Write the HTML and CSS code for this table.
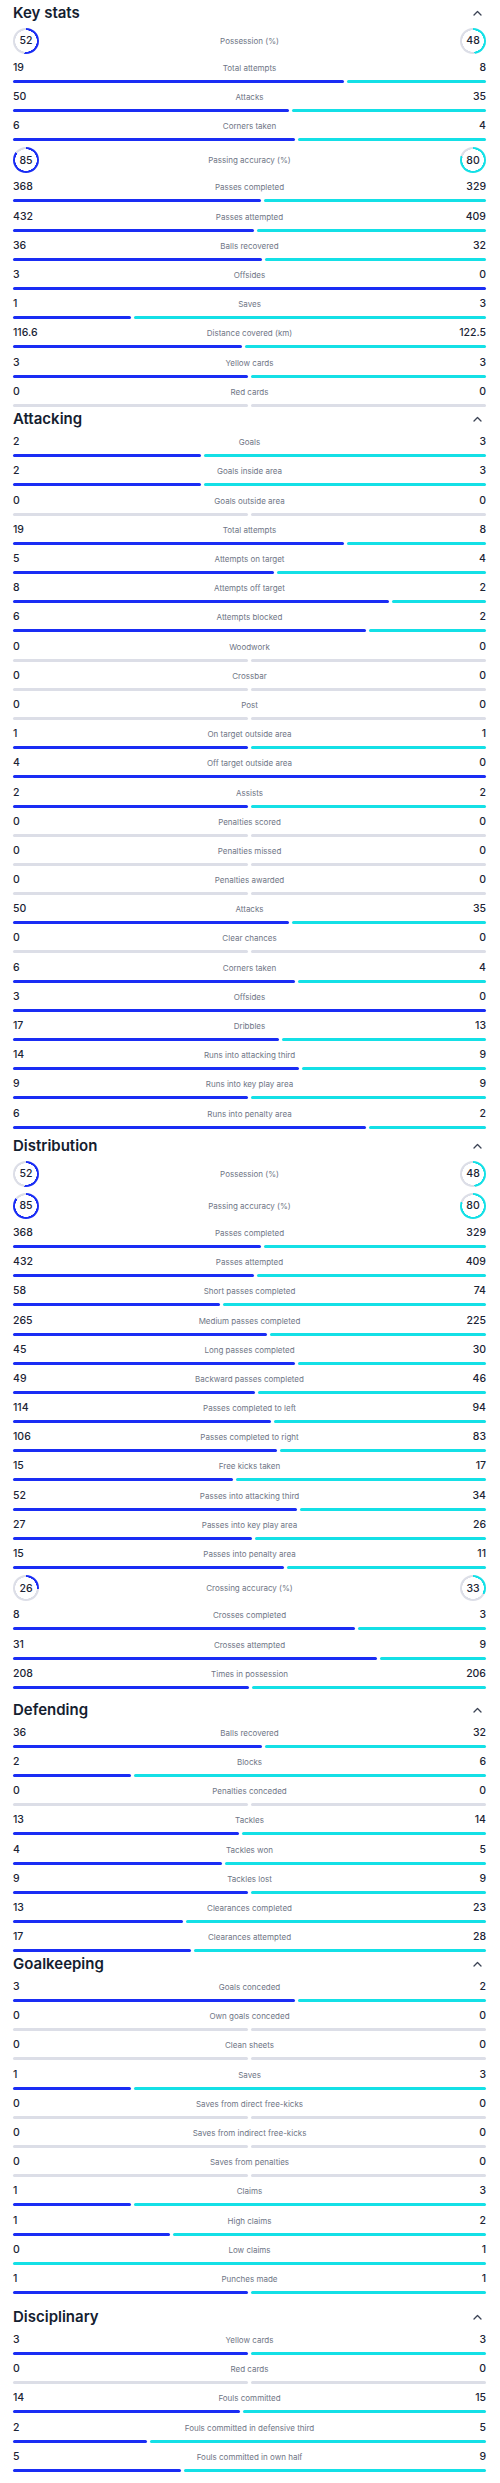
FILE: index.html
```html
<!DOCTYPE html>
<html lang="en">
<head>
<meta charset="utf-8">
<title>Match stats</title>
<link rel="stylesheet" href="styles.css">
</head>
<body>
<main class="page">

<section class="card card--key">
  <header class="card-head"><h2 class="card-title">Key stats</h2><svg class="chev" viewBox="0 0 9 6" width="9" height="6"><polyline points="1,5 4.5,1.5 8,5"/></svg></header>
  <div class="rows">
    <div class="row row--ring"><span class="ring ring--home" style="--p:52">52</span><span class="label">Possession (%)</span><span class="ring ring--away" style="--p:48">48</span></div>
    <div class="row"><span class="num">19</span><span class="label">Total attempts</span><span class="num num--away">8</span><div class="bar"><i class="seg seg--home" style="flex:19"></i><i class="seg seg--away" style="flex:8"></i></div></div>
    <div class="row"><span class="num">50</span><span class="label">Attacks</span><span class="num num--away">35</span><div class="bar"><i class="seg seg--home" style="flex:50"></i><i class="seg seg--away" style="flex:35"></i></div></div>
    <div class="row"><span class="num">6</span><span class="label">Corners taken</span><span class="num num--away">4</span><div class="bar"><i class="seg seg--home" style="flex:6"></i><i class="seg seg--away" style="flex:4"></i></div></div>
    <div class="row row--ring"><span class="ring ring--home" style="--p:85">85</span><span class="label">Passing accuracy (%)</span><span class="ring ring--away" style="--p:80">80</span></div>
    <div class="row"><span class="num">368</span><span class="label">Passes completed</span><span class="num num--away">329</span><div class="bar"><i class="seg seg--home" style="flex:368"></i><i class="seg seg--away" style="flex:329"></i></div></div>
    <div class="row"><span class="num">432</span><span class="label">Passes attempted</span><span class="num num--away">409</span><div class="bar"><i class="seg seg--home" style="flex:432"></i><i class="seg seg--away" style="flex:409"></i></div></div>
    <div class="row"><span class="num">36</span><span class="label">Balls recovered</span><span class="num num--away">32</span><div class="bar"><i class="seg seg--home" style="flex:36"></i><i class="seg seg--away" style="flex:32"></i></div></div>
    <div class="row"><span class="num">3</span><span class="label">Offsides</span><span class="num num--away">0</span><div class="bar"><i class="seg seg--home"></i></div></div>
    <div class="row"><span class="num">1</span><span class="label">Saves</span><span class="num num--away">3</span><div class="bar"><i class="seg seg--home" style="flex:1"></i><i class="seg seg--away" style="flex:3"></i></div></div>
    <div class="row"><span class="num">116.6</span><span class="label">Distance covered (km)</span><span class="num num--away">122.5</span><div class="bar"><i class="seg seg--home" style="flex:116.6"></i><i class="seg seg--away" style="flex:122.5"></i></div></div>
    <div class="row"><span class="num">3</span><span class="label">Yellow cards</span><span class="num num--away">3</span><div class="bar"><i class="seg seg--home" style="flex:3"></i><i class="seg seg--away" style="flex:3"></i></div></div>
    <div class="row"><span class="num">0</span><span class="label">Red cards</span><span class="num num--away">0</span><div class="bar"><i class="seg seg--none"></i><i class="seg seg--none"></i></div></div>
  </div>
</section>

<section class="card card--attacking">
  <header class="card-head"><h2 class="card-title">Attacking</h2><svg class="chev" viewBox="0 0 9 6" width="9" height="6"><polyline points="1,5 4.5,1.5 8,5"/></svg></header>
  <div class="rows">
    <div class="row"><span class="num">2</span><span class="label">Goals</span><span class="num num--away">3</span><div class="bar"><i class="seg seg--home" style="flex:2"></i><i class="seg seg--away" style="flex:3"></i></div></div>
    <div class="row"><span class="num">2</span><span class="label">Goals inside area</span><span class="num num--away">3</span><div class="bar"><i class="seg seg--home" style="flex:2"></i><i class="seg seg--away" style="flex:3"></i></div></div>
    <div class="row"><span class="num">0</span><span class="label">Goals outside area</span><span class="num num--away">0</span><div class="bar"><i class="seg seg--none"></i><i class="seg seg--none"></i></div></div>
    <div class="row"><span class="num">19</span><span class="label">Total attempts</span><span class="num num--away">8</span><div class="bar"><i class="seg seg--home" style="flex:19"></i><i class="seg seg--away" style="flex:8"></i></div></div>
    <div class="row"><span class="num">5</span><span class="label">Attempts on target</span><span class="num num--away">4</span><div class="bar"><i class="seg seg--home" style="flex:5"></i><i class="seg seg--away" style="flex:4"></i></div></div>
    <div class="row"><span class="num">8</span><span class="label">Attempts off target</span><span class="num num--away">2</span><div class="bar"><i class="seg seg--home" style="flex:8"></i><i class="seg seg--away" style="flex:2"></i></div></div>
    <div class="row"><span class="num">6</span><span class="label">Attempts blocked</span><span class="num num--away">2</span><div class="bar"><i class="seg seg--home" style="flex:6"></i><i class="seg seg--away" style="flex:2"></i></div></div>
    <div class="row"><span class="num">0</span><span class="label">Woodwork</span><span class="num num--away">0</span><div class="bar"><i class="seg seg--none"></i><i class="seg seg--none"></i></div></div>
    <div class="row"><span class="num">0</span><span class="label">Crossbar</span><span class="num num--away">0</span><div class="bar"><i class="seg seg--none"></i><i class="seg seg--none"></i></div></div>
    <div class="row"><span class="num">0</span><span class="label">Post</span><span class="num num--away">0</span><div class="bar"><i class="seg seg--none"></i><i class="seg seg--none"></i></div></div>
    <div class="row"><span class="num">1</span><span class="label">On target outside area</span><span class="num num--away">1</span><div class="bar"><i class="seg seg--home" style="flex:1"></i><i class="seg seg--away" style="flex:1"></i></div></div>
    <div class="row"><span class="num">4</span><span class="label">Off target outside area</span><span class="num num--away">0</span><div class="bar"><i class="seg seg--home"></i></div></div>
    <div class="row"><span class="num">2</span><span class="label">Assists</span><span class="num num--away">2</span><div class="bar"><i class="seg seg--home" style="flex:2"></i><i class="seg seg--away" style="flex:2"></i></div></div>
    <div class="row"><span class="num">0</span><span class="label">Penalties scored</span><span class="num num--away">0</span><div class="bar"><i class="seg seg--none"></i><i class="seg seg--none"></i></div></div>
    <div class="row"><span class="num">0</span><span class="label">Penalties missed</span><span class="num num--away">0</span><div class="bar"><i class="seg seg--none"></i><i class="seg seg--none"></i></div></div>
    <div class="row"><span class="num">0</span><span class="label">Penalties awarded</span><span class="num num--away">0</span><div class="bar"><i class="seg seg--none"></i><i class="seg seg--none"></i></div></div>
    <div class="row"><span class="num">50</span><span class="label">Attacks</span><span class="num num--away">35</span><div class="bar"><i class="seg seg--home" style="flex:50"></i><i class="seg seg--away" style="flex:35"></i></div></div>
    <div class="row"><span class="num">0</span><span class="label">Clear chances</span><span class="num num--away">0</span><div class="bar"><i class="seg seg--none"></i><i class="seg seg--none"></i></div></div>
    <div class="row"><span class="num">6</span><span class="label">Corners taken</span><span class="num num--away">4</span><div class="bar"><i class="seg seg--home" style="flex:6"></i><i class="seg seg--away" style="flex:4"></i></div></div>
    <div class="row"><span class="num">3</span><span class="label">Offsides</span><span class="num num--away">0</span><div class="bar"><i class="seg seg--home"></i></div></div>
    <div class="row"><span class="num">17</span><span class="label">Dribbles</span><span class="num num--away">13</span><div class="bar"><i class="seg seg--home" style="flex:17"></i><i class="seg seg--away" style="flex:13"></i></div></div>
    <div class="row"><span class="num">14</span><span class="label">Runs into attacking third</span><span class="num num--away">9</span><div class="bar"><i class="seg seg--home" style="flex:14"></i><i class="seg seg--away" style="flex:9"></i></div></div>
    <div class="row"><span class="num">9</span><span class="label">Runs into key play area</span><span class="num num--away">9</span><div class="bar"><i class="seg seg--home" style="flex:9"></i><i class="seg seg--away" style="flex:9"></i></div></div>
    <div class="row"><span class="num">6</span><span class="label">Runs into penalty area</span><span class="num num--away">2</span><div class="bar"><i class="seg seg--home" style="flex:6"></i><i class="seg seg--away" style="flex:2"></i></div></div>
  </div>
</section>

<section class="card card--distribution">
  <header class="card-head"><h2 class="card-title">Distribution</h2><svg class="chev" viewBox="0 0 9 6" width="9" height="6"><polyline points="1,5 4.5,1.5 8,5"/></svg></header>
  <div class="rows">
    <div class="row row--ring"><span class="ring ring--home" style="--p:52">52</span><span class="label">Possession (%)</span><span class="ring ring--away" style="--p:48">48</span></div>
    <div class="row row--ring"><span class="ring ring--home" style="--p:85">85</span><span class="label">Passing accuracy (%)</span><span class="ring ring--away" style="--p:80">80</span></div>
    <div class="row"><span class="num">368</span><span class="label">Passes completed</span><span class="num num--away">329</span><div class="bar"><i class="seg seg--home" style="flex:368"></i><i class="seg seg--away" style="flex:329"></i></div></div>
    <div class="row"><span class="num">432</span><span class="label">Passes attempted</span><span class="num num--away">409</span><div class="bar"><i class="seg seg--home" style="flex:432"></i><i class="seg seg--away" style="flex:409"></i></div></div>
    <div class="row"><span class="num">58</span><span class="label">Short passes completed</span><span class="num num--away">74</span><div class="bar"><i class="seg seg--home" style="flex:58"></i><i class="seg seg--away" style="flex:74"></i></div></div>
    <div class="row"><span class="num">265</span><span class="label">Medium passes completed</span><span class="num num--away">225</span><div class="bar"><i class="seg seg--home" style="flex:265"></i><i class="seg seg--away" style="flex:225"></i></div></div>
    <div class="row"><span class="num">45</span><span class="label">Long passes completed</span><span class="num num--away">30</span><div class="bar"><i class="seg seg--home" style="flex:45"></i><i class="seg seg--away" style="flex:30"></i></div></div>
    <div class="row"><span class="num">49</span><span class="label">Backward passes completed</span><span class="num num--away">46</span><div class="bar"><i class="seg seg--home" style="flex:49"></i><i class="seg seg--away" style="flex:46"></i></div></div>
    <div class="row"><span class="num">114</span><span class="label">Passes completed to left</span><span class="num num--away">94</span><div class="bar"><i class="seg seg--home" style="flex:114"></i><i class="seg seg--away" style="flex:94"></i></div></div>
    <div class="row"><span class="num">106</span><span class="label">Passes completed to right</span><span class="num num--away">83</span><div class="bar"><i class="seg seg--home" style="flex:106"></i><i class="seg seg--away" style="flex:83"></i></div></div>
    <div class="row"><span class="num">15</span><span class="label">Free kicks taken</span><span class="num num--away">17</span><div class="bar"><i class="seg seg--home" style="flex:15"></i><i class="seg seg--away" style="flex:17"></i></div></div>
    <div class="row"><span class="num">52</span><span class="label">Passes into attacking third</span><span class="num num--away">34</span><div class="bar"><i class="seg seg--home" style="flex:52"></i><i class="seg seg--away" style="flex:34"></i></div></div>
    <div class="row"><span class="num">27</span><span class="label">Passes into key play area</span><span class="num num--away">26</span><div class="bar"><i class="seg seg--home" style="flex:27"></i><i class="seg seg--away" style="flex:26"></i></div></div>
    <div class="row"><span class="num">15</span><span class="label">Passes into penalty area</span><span class="num num--away">11</span><div class="bar"><i class="seg seg--home" style="flex:15"></i><i class="seg seg--away" style="flex:11"></i></div></div>
    <div class="row row--ring"><span class="ring ring--home" style="--p:26">26</span><span class="label">Crossing accuracy (%)</span><span class="ring ring--away" style="--p:33">33</span></div>
    <div class="row"><span class="num">8</span><span class="label">Crosses completed</span><span class="num num--away">3</span><div class="bar"><i class="seg seg--home" style="flex:8"></i><i class="seg seg--away" style="flex:3"></i></div></div>
    <div class="row"><span class="num">31</span><span class="label">Crosses attempted</span><span class="num num--away">9</span><div class="bar"><i class="seg seg--home" style="flex:31"></i><i class="seg seg--away" style="flex:9"></i></div></div>
    <div class="row"><span class="num">208</span><span class="label">Times in possession</span><span class="num num--away">206</span><div class="bar"><i class="seg seg--home" style="flex:208"></i><i class="seg seg--away" style="flex:206"></i></div></div>
  </div>
</section>

<section class="card card--defending">
  <header class="card-head"><h2 class="card-title">Defending</h2><svg class="chev" viewBox="0 0 9 6" width="9" height="6"><polyline points="1,5 4.5,1.5 8,5"/></svg></header>
  <div class="rows">
    <div class="row"><span class="num">36</span><span class="label">Balls recovered</span><span class="num num--away">32</span><div class="bar"><i class="seg seg--home" style="flex:36"></i><i class="seg seg--away" style="flex:32"></i></div></div>
    <div class="row"><span class="num">2</span><span class="label">Blocks</span><span class="num num--away">6</span><div class="bar"><i class="seg seg--home" style="flex:2"></i><i class="seg seg--away" style="flex:6"></i></div></div>
    <div class="row"><span class="num">0</span><span class="label">Penalties conceded</span><span class="num num--away">0</span><div class="bar"><i class="seg seg--none"></i><i class="seg seg--none"></i></div></div>
    <div class="row"><span class="num">13</span><span class="label">Tackles</span><span class="num num--away">14</span><div class="bar"><i class="seg seg--home" style="flex:13"></i><i class="seg seg--away" style="flex:14"></i></div></div>
    <div class="row"><span class="num">4</span><span class="label">Tackles won</span><span class="num num--away">5</span><div class="bar"><i class="seg seg--home" style="flex:4"></i><i class="seg seg--away" style="flex:5"></i></div></div>
    <div class="row"><span class="num">9</span><span class="label">Tackles lost</span><span class="num num--away">9</span><div class="bar"><i class="seg seg--home" style="flex:9"></i><i class="seg seg--away" style="flex:9"></i></div></div>
    <div class="row"><span class="num">13</span><span class="label">Clearances completed</span><span class="num num--away">23</span><div class="bar"><i class="seg seg--home" style="flex:13"></i><i class="seg seg--away" style="flex:23"></i></div></div>
    <div class="row"><span class="num">17</span><span class="label">Clearances attempted</span><span class="num num--away">28</span><div class="bar"><i class="seg seg--home" style="flex:17"></i><i class="seg seg--away" style="flex:28"></i></div></div>
  </div>
</section>

<section class="card card--goalkeeping">
  <header class="card-head"><h2 class="card-title">Goalkeeping</h2><svg class="chev" viewBox="0 0 9 6" width="9" height="6"><polyline points="1,5 4.5,1.5 8,5"/></svg></header>
  <div class="rows">
    <div class="row"><span class="num">3</span><span class="label">Goals conceded</span><span class="num num--away">2</span><div class="bar"><i class="seg seg--home" style="flex:3"></i><i class="seg seg--away" style="flex:2"></i></div></div>
    <div class="row"><span class="num">0</span><span class="label">Own goals conceded</span><span class="num num--away">0</span><div class="bar"><i class="seg seg--none"></i><i class="seg seg--none"></i></div></div>
    <div class="row"><span class="num">0</span><span class="label">Clean sheets</span><span class="num num--away">0</span><div class="bar"><i class="seg seg--none"></i><i class="seg seg--none"></i></div></div>
    <div class="row"><span class="num">1</span><span class="label">Saves</span><span class="num num--away">3</span><div class="bar"><i class="seg seg--home" style="flex:1"></i><i class="seg seg--away" style="flex:3"></i></div></div>
    <div class="row"><span class="num">0</span><span class="label">Saves from direct free-kicks</span><span class="num num--away">0</span><div class="bar"><i class="seg seg--none"></i><i class="seg seg--none"></i></div></div>
    <div class="row"><span class="num">0</span><span class="label">Saves from indirect free-kicks</span><span class="num num--away">0</span><div class="bar"><i class="seg seg--none"></i><i class="seg seg--none"></i></div></div>
    <div class="row"><span class="num">0</span><span class="label">Saves from penalties</span><span class="num num--away">0</span><div class="bar"><i class="seg seg--none"></i><i class="seg seg--none"></i></div></div>
    <div class="row"><span class="num">1</span><span class="label">Claims</span><span class="num num--away">3</span><div class="bar"><i class="seg seg--home" style="flex:1"></i><i class="seg seg--away" style="flex:3"></i></div></div>
    <div class="row"><span class="num">1</span><span class="label">High claims</span><span class="num num--away">2</span><div class="bar"><i class="seg seg--home" style="flex:1"></i><i class="seg seg--away" style="flex:2"></i></div></div>
    <div class="row"><span class="num">0</span><span class="label">Low claims</span><span class="num num--away">1</span><div class="bar"><i class="seg seg--away"></i></div></div>
    <div class="row"><span class="num">1</span><span class="label">Punches made</span><span class="num num--away">1</span><div class="bar"><i class="seg seg--home" style="flex:1"></i><i class="seg seg--away" style="flex:1"></i></div></div>
  </div>
</section>

<section class="card card--disciplinary">
  <header class="card-head"><h2 class="card-title">Disciplinary</h2><svg class="chev" viewBox="0 0 9 6" width="9" height="6"><polyline points="1,5 4.5,1.5 8,5"/></svg></header>
  <div class="rows">
    <div class="row"><span class="num">3</span><span class="label">Yellow cards</span><span class="num num--away">3</span><div class="bar"><i class="seg seg--home" style="flex:3"></i><i class="seg seg--away" style="flex:3"></i></div></div>
    <div class="row"><span class="num">0</span><span class="label">Red cards</span><span class="num num--away">0</span><div class="bar"><i class="seg seg--none"></i><i class="seg seg--none"></i></div></div>
    <div class="row"><span class="num">14</span><span class="label">Fouls committed</span><span class="num num--away">15</span><div class="bar"><i class="seg seg--home" style="flex:14"></i><i class="seg seg--away" style="flex:15"></i></div></div>
    <div class="row"><span class="num">2</span><span class="label">Fouls committed in defensive third</span><span class="num num--away">5</span><div class="bar"><i class="seg seg--home" style="flex:2"></i><i class="seg seg--away" style="flex:5"></i></div></div>
    <div class="row"><span class="num">5</span><span class="label">Fouls committed in own half</span><span class="num num--away">9</span><div class="bar"><i class="seg seg--home" style="flex:5"></i><i class="seg seg--away" style="flex:9"></i></div></div>
  </div>
</section>

</main>
</body>
</html>
```

FILE: styles.css
```css
* { box-sizing: border-box; }

body {
  margin: 0;
  background: #ffffff;
  font-family: Inter, "Noto Sans", "Liberation Sans", sans-serif;
  color: #1b2435;
}

.page {
  padding-top: 2.5px;
  padding-bottom: 10px;
}

.card {
  padding: 0 14px 0 13px;
  background: #ffffff;
}

.card--attacking { margin-top: 2.5px; }
.card--distribution { margin-top: 7px; }
.card--defending { margin-top: 11px; }
.card--goalkeeping { margin-top: 2px; }
.card--disciplinary { margin-top: 13px; }

.card-head {
  display: flex;
  align-items: center;
  justify-content: space-between;
  height: 20px;
  margin-bottom: 5px;
}

.card-title {
  margin: 0;
  font-size: 15px;
  line-height: 20px;
  font-weight: 600;
  color: #14202f;
}

.chev {
  margin-right: 4px;
  fill: none;
  stroke: #3b4354;
  stroke-width: 1.3;
  stroke-linecap: round;
  stroke-linejoin: round;
}

.rows {
  display: flex;
  flex-direction: column;
  gap: 6.2px;
}

.row {
  display: grid;
  grid-template-columns: 1fr auto 1fr;
  align-items: center;
  row-gap: 4px;
}

.num {
  justify-self: start;
  font-size: 10.5px;
  line-height: 16px;
  font-weight: 500;
  color: #1b2435;
}

.num--away { justify-self: end; }

.label {
  font-size: 8px;
  line-height: 16px;
  color: #6f7686;
  white-space: nowrap;
  text-align: center;
}

.bar {
  grid-column: 1 / -1;
  display: flex;
  gap: 3px;
  height: 3px;
}

.seg {
  flex: 1 1 0;
  border-radius: 2px;
}

.seg--home { background: #1a2df4; }
.seg--away { background: #14e0e6; }
.seg--none { background: #dcdee7; }

.ring {
  width: 26px;
  height: 26px;
  border-radius: 50%;
  display: flex;
  align-items: center;
  justify-content: center;
  font-size: 10.5px;
  font-weight: 500;
  color: #1b2435;
  background:
    radial-gradient(closest-side, #ffffff calc(100% - 2.4px), transparent calc(100% - 2px)),
    conic-gradient(var(--c) calc(var(--p) * 1%), #dcdee7 0);
}

.ring--home { --c: #1a2df4; justify-self: start; }
.ring--away { --c: #14e0e6; justify-self: end; }
```
